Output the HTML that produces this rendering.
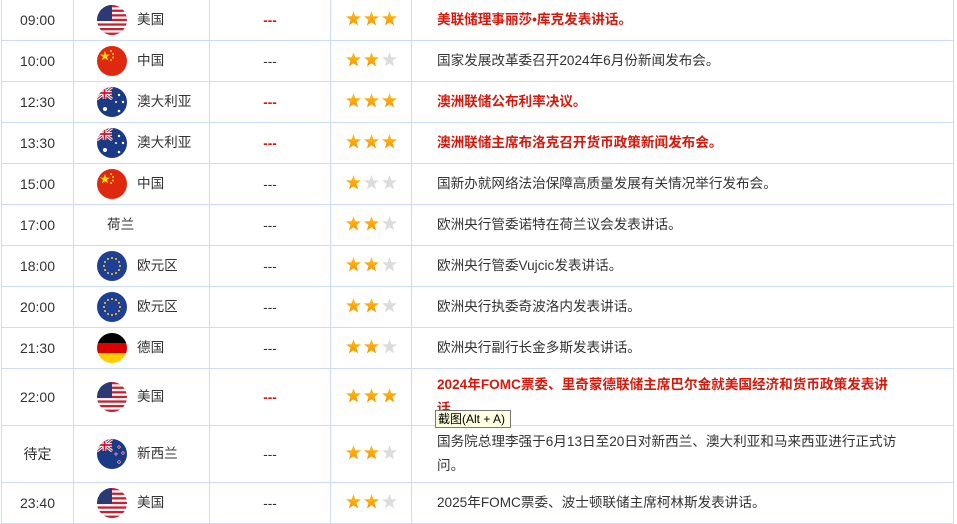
<!DOCTYPE html>
<html><head><meta charset="utf-8"><style>
body{margin:0;width:957px;height:524px;overflow:hidden;background:#fff;font-family:"Liberation Sans","Noto Sans CJK SC",sans-serif;font-size:13.6px;color:#333;position:relative}
table{position:absolute;left:1px;top:-1px;border-collapse:collapse;table-layout:fixed}
td{border:1px solid #cddcf5;padding:0;text-align:center;vertical-align:middle}
td.t{font-size:14px}
td.c{text-align:left}
td.e{text-align:left;padding-left:25px;padding-right:44px;line-height:24px}
.r{color:#d6190c;font-weight:bold}
.d{color:#d6190c;font-weight:bold}
.cty{display:flex;align-items:center;padding-left:23px;font-size:13.6px;line-height:16px}
.cty svg{width:30px;height:30px;margin-right:10px;flex:none}
td.st{text-align:left;padding-left:15px}
td.st svg{display:block;margin-top:-3px}
.tip{position:absolute;left:435px;top:410px;width:76px;height:18px;background:#ffffe1;border:1px solid #777;font-size:12px;line-height:17px;padding-left:2px;box-sizing:border-box;color:#000}
</style></head><body>
<svg width="0" height="0" style="position:absolute"><defs>
<linearGradient id="og" x1="0" y1="0" x2="0" y2="1"><stop offset="0" stop-color="#ffc21a"/><stop offset="1" stop-color="#f59300"/></linearGradient>
<polygon id="s" points="7.5,0 9.3,5.2 15,5.4 10.5,8.9 12.1,14.4 7.5,11.2 2.9,14.4 4.5,8.9 0,5.4 5.7,5.2"/>
<g id="s3"><use href="#s" fill="url(#og)"/><use href="#s" x="18" fill="url(#og)"/><use href="#s" x="36" fill="url(#og)"/></g>
<g id="s2"><use href="#s" fill="url(#og)"/><use href="#s" x="18" fill="url(#og)"/><use href="#s" x="36" fill="#dcdcdc"/></g>
<g id="s1"><use href="#s" fill="url(#og)"/><use href="#s" x="18" fill="#dcdcdc"/><use href="#s" x="36" fill="#dcdcdc"/></g>
<clipPath id="cc"><circle cx="15" cy="15" r="15"/></clipPath>
<g id="us"><g clip-path="url(#cc)"><rect width="30" height="30" fill="#fff"/><g fill="#c8202f"><rect y="0" width="30" height="2.3"/><rect y="4.6" width="30" height="2.3"/><rect y="9.2" width="30" height="2.3"/><rect y="13.8" width="30" height="2.3"/><rect y="18.4" width="30" height="2.3"/><rect y="23" width="30" height="2.3"/><rect y="27.6" width="30" height="2.4"/></g><rect width="15" height="16" fill="#2b3a74"/></g></g>
<g id="cn"><circle cx="15" cy="15" r="15" fill="#de2910"/><polygon points="8,5 9.2,8.6 13,8.6 10,10.8 11.1,14.4 8,12.2 4.9,14.4 6,10.8 3,8.6 6.8,8.6" fill="#ffde00"/><g fill="#ffde00"><circle cx="14" cy="5" r="1"/><circle cx="16" cy="8" r="1"/><circle cx="16" cy="11.5" r="1"/><circle cx="14" cy="14" r="1"/></g></g>
<g id="au"><g clip-path="url(#cc)"><rect width="30" height="30" fill="#1a3a85"/><path d="M0,0L15,12M15,0L0,12" stroke="#fff" stroke-width="3"/><path d="M0,0L15,12M15,0L0,12" stroke="#cf142b" stroke-width="1"/><path d="M7.5,0V12M0,6H15" stroke="#fff" stroke-width="3.5"/><path d="M7.5,0V12M0,6H15" stroke="#cf142b" stroke-width="1.8"/><g fill="#fff"><circle cx="8" cy="22" r="2"/><circle cx="22" cy="8" r="1.2"/><circle cx="26" cy="15" r="1.2"/><circle cx="22" cy="24" r="1.3"/><circle cx="19" cy="15" r="1"/></g></g></g>
<g id="nz"><g clip-path="url(#cc)"><rect width="30" height="30" fill="#1a3a85"/><path d="M0,0L15,12M15,0L0,12" stroke="#fff" stroke-width="3"/><path d="M0,0L15,12M15,0L0,12" stroke="#cf142b" stroke-width="1"/><path d="M7.5,0V12M0,6H15" stroke="#fff" stroke-width="3.5"/><path d="M7.5,0V12M0,6H15" stroke="#cf142b" stroke-width="1.8"/><g fill="#cf142b" stroke="#fff" stroke-width=".5"><circle cx="22" cy="8" r="1.3"/><circle cx="26" cy="14" r="1.3"/><circle cx="19" cy="15" r="1.2"/><circle cx="22" cy="23" r="1.4"/></g></g></g>
<g id="eu"><circle cx="15" cy="15" r="15" fill="#1f3e96"/><g fill="#ffd400"><circle cx="15" cy="7" r="1"/><circle cx="19" cy="8" r="1"/><circle cx="22" cy="11" r="1"/><circle cx="23" cy="15" r="1"/><circle cx="22" cy="19" r="1"/><circle cx="19" cy="22" r="1"/><circle cx="15" cy="23" r="1"/><circle cx="11" cy="22" r="1"/><circle cx="8" cy="19" r="1"/><circle cx="7" cy="15" r="1"/><circle cx="8" cy="11" r="1"/><circle cx="11" cy="8" r="1"/></g></g>
<g id="de"><g clip-path="url(#cc)"><rect width="30" height="10" fill="#000"/><rect y="10" width="30" height="10" fill="#dd0000"/><rect y="20" width="30" height="10" fill="#ffce00"/></g></g>
</defs></svg>
<table>
<colgroup><col style="width:72px"><col style="width:136px"><col style="width:121px"><col style="width:81px"><col style="width:542px"></colgroup>
<tr style="height:41px"><td class="t">09:00</td><td class="c"><div class="cty"><svg><use href="#us"/></svg>美国</div></td><td class="d">---</td><td class="st"><svg width="52" height="15"><use href="#s3"/></svg></td><td class="e r">美联储理事丽莎•库克发表讲话。</td></tr>
<tr style="height:41px"><td class="t">10:00</td><td class="c"><div class="cty"><svg><use href="#cn"/></svg>中国</div></td><td>---</td><td class="st"><svg width="52" height="15"><use href="#s2"/></svg></td><td class="e">国家发展改革委召开2024年6月份新闻发布会。</td></tr>
<tr style="height:41px"><td class="t">12:30</td><td class="c"><div class="cty"><svg><use href="#au"/></svg>澳大利亚</div></td><td class="d">---</td><td class="st"><svg width="52" height="15"><use href="#s3"/></svg></td><td class="e r">澳洲联储公布利率决议。</td></tr>
<tr style="height:41px"><td class="t">13:30</td><td class="c"><div class="cty"><svg><use href="#au"/></svg>澳大利亚</div></td><td class="d">---</td><td class="st"><svg width="52" height="15"><use href="#s3"/></svg></td><td class="e r">澳洲联储主席布洛克召开货币政策新闻发布会。</td></tr>
<tr style="height:41px"><td class="t">15:00</td><td class="c"><div class="cty"><svg><use href="#cn"/></svg>中国</div></td><td>---</td><td class="st"><svg width="52" height="15"><use href="#s1"/></svg></td><td class="e">国新办就网络法治保障高质量发展有关情况举行发布会。</td></tr>
<tr style="height:41px"><td class="t">17:00</td><td class="c"><div class="cty" style="padding-left:33px">荷兰</div></td><td>---</td><td class="st"><svg width="52" height="15"><use href="#s2"/></svg></td><td class="e">欧洲央行管委诺特在荷兰议会发表讲话。</td></tr>
<tr style="height:41px"><td class="t">18:00</td><td class="c"><div class="cty"><svg><use href="#eu"/></svg>欧元区</div></td><td>---</td><td class="st"><svg width="52" height="15"><use href="#s2"/></svg></td><td class="e">欧洲央行管委Vujcic发表讲话。</td></tr>
<tr style="height:41px"><td class="t">20:00</td><td class="c"><div class="cty"><svg><use href="#eu"/></svg>欧元区</div></td><td>---</td><td class="st"><svg width="52" height="15"><use href="#s2"/></svg></td><td class="e">欧洲央行执委奇波洛内发表讲话。</td></tr>
<tr style="height:41px"><td class="t">21:30</td><td class="c"><div class="cty"><svg><use href="#de"/></svg>德国</div></td><td>---</td><td class="st"><svg width="52" height="15"><use href="#s2"/></svg></td><td class="e">欧洲央行副行长金多斯发表讲话。</td></tr>
<tr style="height:57px"><td class="t">22:00</td><td class="c"><div class="cty"><svg><use href="#us"/></svg>美国</div></td><td class="d">---</td><td class="st"><svg width="52" height="15"><use href="#s3"/></svg></td><td class="e r" style="padding-right:55px">2024年FOMC票委、里奇蒙德联储主席巴尔金就美国经济和货币政策发表讲话</td></tr>
<tr style="height:57px"><td class="t">待定</td><td class="c"><div class="cty"><svg><use href="#nz"/></svg>新西兰</div></td><td>---</td><td class="st"><svg width="52" height="15"><use href="#s2"/></svg></td><td class="e">国务院总理李强于6月13日至20日对新西兰、澳大利亚和马来西亚进行正式访问。</td></tr>
<tr style="height:41px"><td class="t">23:40</td><td class="c"><div class="cty"><svg><use href="#us"/></svg>美国</div></td><td>---</td><td class="st"><svg width="52" height="15"><use href="#s2"/></svg></td><td class="e">2025年FOMC票委、波士顿联储主席柯林斯发表讲话。</td></tr>
</table>
<div class="tip">截图(Alt + A)</div>
</body></html>
